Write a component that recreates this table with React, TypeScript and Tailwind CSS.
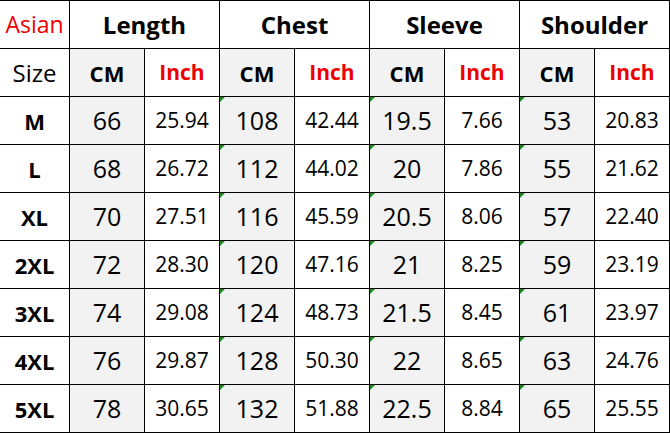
import React from 'react';

const groups = ['Length', 'Chest', 'Sleeve', 'Shoulder'];

const rows: { size: string; vals: [string, string][] }[] = [
  { size: 'M', vals: [['66', '25.94'], ['108', '42.44'], ['19.5', '7.66'], ['53', '20.83']] },
  { size: 'L', vals: [['68', '26.72'], ['112', '44.02'], ['20', '7.86'], ['55', '21.62']] },
  { size: 'XL', vals: [['70', '27.51'], ['116', '45.59'], ['20.5', '8.06'], ['57', '22.40']] },
  { size: '2XL', vals: [['72', '28.30'], ['120', '47.16'], ['21', '8.25'], ['59', '23.19']] },
  { size: '3XL', vals: [['74', '29.08'], ['124', '48.73'], ['21.5', '8.45'], ['61', '23.97']] },
  { size: '4XL', vals: [['76', '29.87'], ['128', '50.30'], ['22', '8.65'], ['63', '24.76']] },
  { size: '5XL', vals: [['78', '30.65'], ['132', '51.88'], ['22.5', '8.84'], ['65', '25.55']] },
];

const cell = 'flex items-center justify-center leading-none';

export default function App() {
  return (
    <div className="w-[670px] h-[433px] bg-white font-['Open_Sans','Noto_Sans',sans-serif] text-black">
      <div className="grid grid-cols-[69px_repeat(8,74px)] grid-rows-[repeat(9,47px)] gap-px bg-black pt-px pr-px pb-px">
        <div className={`${cell} bg-white text-[23px] text-[#ee0000]`}>Asian</div>
        {groups.map((g) => (
          <div key={g} className={`${cell} col-span-2 bg-white text-[24px] font-bold`}>
            {g}
          </div>
        ))}

        <div className={`${cell} bg-white text-[24px]`}>Size</div>
        {groups.map((g) => (
          <React.Fragment key={g}>
            <div className={`${cell} bg-[#f2f2f2] text-[22px] font-bold`}>CM</div>
            <div className={`${cell} bg-white text-[21px] font-bold text-[#ee0000]`}>Inch</div>
          </React.Fragment>
        ))}

        {rows.map((r) => (
          <React.Fragment key={r.size}>
            <div className={`${cell} bg-white text-[22px] font-bold`}>{r.size}</div>
            {r.vals.map(([cm, inch], i) => (
              <React.Fragment key={i}>
                <div className={`${cell} relative bg-[#f2f2f2] text-[25px]`}>
                  {i > 0 && (
                    <span className="absolute left-0 top-0 w-0 h-0 border-t-[5px] border-r-[5px] border-t-[#1e8a1e] border-r-transparent" />
                  )}
                  {cm}
                </div>
                <div className={`${cell} bg-white text-[21px]`}>{inch}</div>
              </React.Fragment>
            ))}
          </React.Fragment>
        ))}
      </div>
    </div>
  );
}
